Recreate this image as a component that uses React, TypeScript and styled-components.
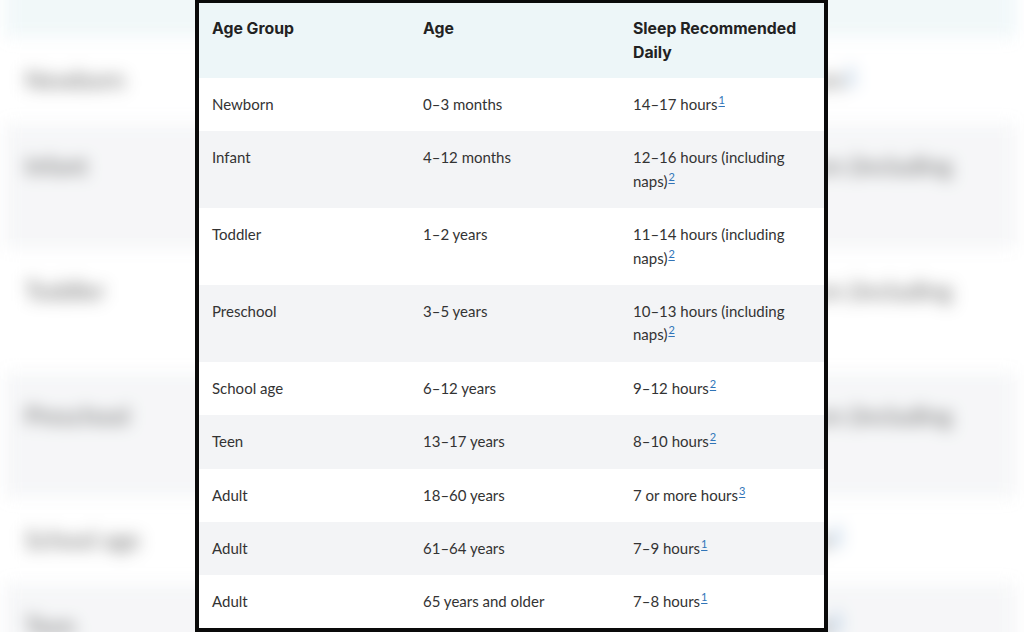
import React from 'react';
import styled, {createGlobalStyle} from 'styled-components';

type Row = {
    group: string
    age: string
    sleep: string
    note: number
}

const rows: Row[] = [
    {group: 'Newborn', age: '0–3 months', sleep: '14–17 hours', note: 1},
    {group: 'Infant', age: '4–12 months', sleep: '12–16 hours (including naps)', note: 2},
    {group: 'Toddler', age: '1–2 years', sleep: '11–14 hours (including naps)', note: 2},
    {group: 'Preschool', age: '3–5 years', sleep: '10–13 hours (including naps)', note: 2},
    {group: 'School age', age: '6–12 years', sleep: '9–12 hours', note: 2},
    {group: 'Teen', age: '13–17 years', sleep: '8–10 hours', note: 2},
    {group: 'Adult', age: '18–60 years', sleep: '7 or more hours', note: 3},
    {group: 'Adult', age: '61–64 years', sleep: '7–9 hours', note: 1},
    {group: 'Adult', age: '65 years and older', sleep: '7–8 hours', note: 1},
];

const GlobalStyle = createGlobalStyle`
    html, body {
        margin: 0;
        padding: 0;
        background: #fff;
    }
    body {
        font-family: "Lato", "Noto Sans", sans-serif;
    }
`;

const SleepTable: React.FC = () => (
    <Table>
        <colgroup>
            <col style={{width: 211}} />
            <col style={{width: 210}} />
            <col style={{width: 204}} />
        </colgroup>
        <thead>
            <tr>
                <HeadCell>Age Group</HeadCell>
                <HeadCell>Age</HeadCell>
                <HeadCell>Sleep Recommended Daily</HeadCell>
            </tr>
        </thead>
        <tbody>
            {rows.map((r, i) => (
                <BodyRow key={i} striped={i % 2 === 1}>
                    <Cell>{r.group}</Cell>
                    <Cell>{r.age}</Cell>
                    <Cell>
                        {r.sleep}
                        <Note href={`#ref-${r.note}`}>{r.note}</Note>
                    </Cell>
                </BodyRow>
            ))}
        </tbody>
    </Table>
);

const App: React.FC = () => {
    return (
        <>
            <GlobalStyle />
            <Page>
                <Backdrop aria-hidden="true">
                    <SleepTable />
                </Backdrop>
                <Frame>
                    <SleepTable />
                </Frame>
            </Page>
        </>
    );
};

const Page = styled.div`
    position: relative;
    width: 1024px;
    height: 632px;
    overflow: hidden;
    display: flex;
    justify-content: center;
    background: #fff;
`;

// blurred, enlarged copy of the table behind the framed one
const Backdrop = styled.div`
    position: absolute;
    left: 4px;
    top: -84px;
    width: 625px;
    transform: scale(1.62);
    transform-origin: 0 0;
    filter: blur(5px);
    opacity: 0.75;
    pointer-events: none;
`;

const Frame = styled.div`
    position: relative;
    box-sizing: border-box;
    width: 633px;
    height: 632px;
    margin-left: -1px;
    border: 4px solid #0a0a0a;
    border-top-width: 3px;
    background: #fff;
    overflow: hidden;
`;

const Table = styled.table`
    width: 625px;
    table-layout: fixed;
    border-collapse: collapse;
    font-family: "Lato", "Noto Sans", sans-serif;
    font-size: 15px;
    line-height: 23.4px;
    color: #333;
`;

const HeadCell = styled.th`
    background: #edf6f8;
    padding: 14px 18px 13px 13px;
    text-align: left;
    vertical-align: top;
    font-family: "Inter", "Noto Sans", sans-serif;
    font-weight: 700;
    font-size: 15.8px;
    line-height: 24px;
    color: #222;
`;

const BodyRow = styled.tr<{striped: boolean}>`
    background: ${props => props.striped ? '#f3f4f6' : '#fff'};
`;

const Cell = styled.td`
    padding: 15px 18px 15px 13px;
    vertical-align: top;
    text-align: left;
`;

const Note = styled.a`
    font-size: 11px;
    line-height: 0;
    vertical-align: 6px;
    color: #2f74b8;
    text-decoration: underline;
    text-underline-offset: 2px;
    margin-left: 1px;
`;

export default App;
